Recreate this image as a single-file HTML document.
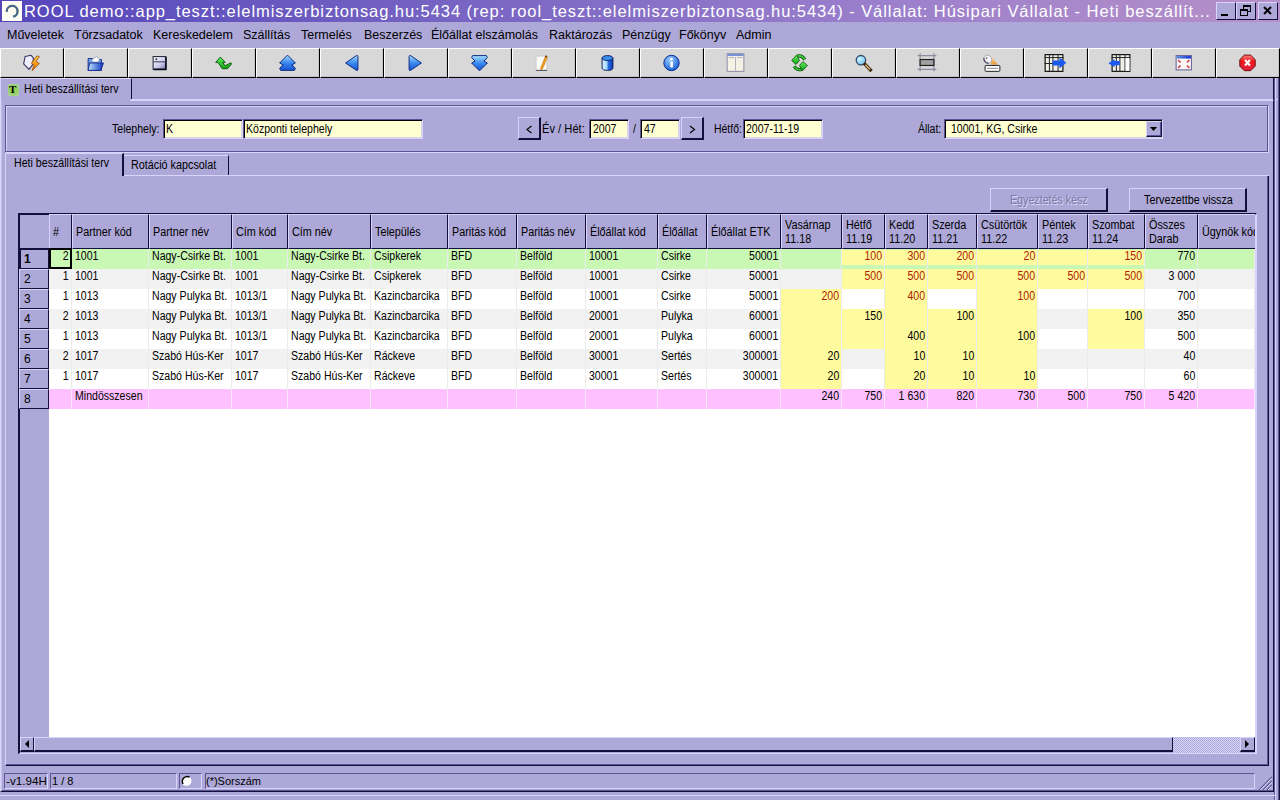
<!DOCTYPE html><html><head><meta charset="utf-8"><style>
*{margin:0;padding:0;box-sizing:border-box}
html,body{width:1280px;height:800px;overflow:hidden;background:#ada8d8;font-family:"Liberation Sans",sans-serif;color:#000;font-size:11px}
.a{position:absolute}
.t{position:absolute;white-space:nowrap;line-height:1}
.raised{position:absolute;background:#ada8d8;border-top:1px solid #d8d4fc;border-left:1px solid #d8d4fc;border-right:1px solid #12103a;border-bottom:1px solid #12103a}
.sunk{position:absolute;border-top:1px solid #5c5494;border-left:1px solid #5c5494;border-right:1px solid #d8d4fc;border-bottom:1px solid #d8d4fc}
.inp{position:absolute;top:119px;height:20px;background:#ffffd2;border-top:1px solid #5c5494;border-left:1px solid #5c5494;border-right:1px solid #d8d4fc;border-bottom:1px solid #d8d4fc;box-shadow:inset 1px 1px 0 #000, inset -1px -1px 0 #d6d3e4}
.tb{position:absolute;top:48px;height:30px;width:64px;background:#d8d8d8;border-top:1px solid #fff;border-left:1px solid #fff;border-right:1px solid #000;border-bottom:1px solid #000;box-shadow:inset -1px -1px 0 #c4c4c8}
.tb svg{position:absolute;left:0;top:0}
.hc{position:absolute;top:214px;height:35px;background:#ada8d8;border-left:1px solid #d8d4fc;border-top:1px solid #d8d4fc;border-right:1px solid #12103a;border-bottom:1px solid #12103a}
.hc span{position:absolute;left:4px;white-space:nowrap;line-height:1}
.rh{position:absolute;left:19px;width:30px;height:20px;background:#ada8d8;border-top:1px solid #d8d4fc;border-left:1px solid #d8d4fc;border-right:1px solid #12103a;border-bottom:1px solid #12103a}
.rh span{position:absolute;left:5px;top:5px;font-size:12px;line-height:1}
.c{position:absolute;height:20px;border-right:1px solid #ebebeb;white-space:nowrap;line-height:1}
.c span{position:absolute;top:5px}
</style></head><body>
<div class="a" style="left:0;top:0;width:1280px;height:22px;background:linear-gradient(90deg,#5646bc 0%,#6c5cc0 25%,#9c80cc 70%,#b690c8 100%)"></div>
<div class="a" style="left:2px;top:1px;width:20px;height:20px;background:#fdfdf4"></div>
<svg class="a" style="left:2px;top:1px" width="20" height="20"><path d="M4.8 10.8 A5.4 5.4 0 1 1 11 15.6" stroke="#456885" stroke-width="2.4" fill="none"/></svg>
<div class="t" style="left:24px;top:3px;font-size:16.5px;color:#fff;letter-spacing:0.94px">ROOL demo::app_teszt::elelmiszerbiztonsag.hu:5434 (rep: rool_teszt::elelmiszerbiztonsag.hu:5434) - Vállalat: Húsipari Vállalat - Heti beszállít...</div>
<div class="raised" style="left:1216px;top:2px;width:20px;height:18px"></div>
<div class="raised" style="left:1236px;top:2px;width:20px;height:18px"></div>
<div class="raised" style="left:1258px;top:2px;width:20px;height:18px"></div>
<div class="a" style="left:1221px;top:14px;width:7px;height:2px;background:#000"></div>
<svg class="a" style="left:1236px;top:2px" width="20" height="18"><rect x="7.5" y="3.5" width="7" height="6" fill="none" stroke="#000"/><path d="M7 4 H15" stroke="#000" stroke-width="2"/><rect x="4.5" y="7.5" width="7" height="6" fill="#ada8d8" stroke="#000"/><path d="M4 8 H12" stroke="#000" stroke-width="2"/></svg>
<svg class="a" style="left:1258px;top:2px" width="20" height="18"><path d="M6 5 L13 12 M13 5 L6 12" stroke="#000" fill="none" stroke-width="2"/></svg>
<div class="t" style="left:7px;top:29px;font-size:12.5px">Műveletek</div>
<div class="t" style="left:74px;top:29px;font-size:12.5px">Törzsadatok</div>
<div class="t" style="left:153px;top:29px;font-size:12.5px">Kereskedelem</div>
<div class="t" style="left:243px;top:29px;font-size:12.5px">Szállítás</div>
<div class="t" style="left:301px;top:29px;font-size:12.5px">Termelés</div>
<div class="t" style="left:364px;top:29px;font-size:12.5px">Beszerzés</div>
<div class="t" style="left:431px;top:29px;font-size:12.5px">Élőállat elszámolás</div>
<div class="t" style="left:549px;top:29px;font-size:12.5px">Raktározás</div>
<div class="t" style="left:622px;top:29px;font-size:12.5px">Pénzügy</div>
<div class="t" style="left:679px;top:29px;font-size:12.5px">Főkönyv</div>
<div class="t" style="left:736px;top:29px;font-size:12.5px">Admin</div>
<svg width="0" height="0" style="position:absolute"><defs><linearGradient id="gblue" x1="0" y1="0" x2="0" y2="1"><stop offset="0" stop-color="#a8e0ff"/><stop offset="0.5" stop-color="#3a8af0"/><stop offset="1" stop-color="#1a50d0"/></linearGradient><linearGradient id="ggr" x1="0" y1="0" x2="0" y2="1"><stop offset="0" stop-color="#60f060"/><stop offset="1" stop-color="#10a010"/></linearGradient><linearGradient id="gor" x1="0" y1="0" x2="0" y2="1"><stop offset="0" stop-color="#ffd040"/><stop offset="1" stop-color="#e07000"/></linearGradient><linearGradient id="gfold" x1="0" y1="0" x2="1" y2="0"><stop offset="0" stop-color="#c0e8ff"/><stop offset="1" stop-color="#0a30c0"/></linearGradient><linearGradient id="gflop" x1="0" y1="0" x2="1" y2="1"><stop offset="0" stop-color="#ffffff"/><stop offset="0.6" stop-color="#c8c8ec"/><stop offset="1" stop-color="#7070a0"/></linearGradient><linearGradient id="gcyl" x1="0" y1="0" x2="1" y2="0"><stop offset="0" stop-color="#d8f4ff"/><stop offset="0.45" stop-color="#a0d8ff"/><stop offset="0.55" stop-color="#2a70e0"/><stop offset="1" stop-color="#0a3ac0"/></linearGradient><radialGradient id="ginfo" cx="0.4" cy="0.3" r="0.8"><stop offset="0" stop-color="#9ad0ff"/><stop offset="1" stop-color="#0a50d0"/></radialGradient><linearGradient id="gred" x1="0" y1="0" x2="0" y2="1"><stop offset="0" stop-color="#ff8080"/><stop offset="0.4" stop-color="#f01818"/><stop offset="1" stop-color="#e02040"/></linearGradient><linearGradient id="gtitle" x1="0" y1="0" x2="1" y2="0"><stop offset="0" stop-color="#5a90e0"/><stop offset="1" stop-color="#0a2ad0"/></linearGradient><radialGradient id="glens" cx="0.35" cy="0.35" r="0.7"><stop offset="0" stop-color="#c8f8ff"/><stop offset="1" stop-color="#78c0ee"/></radialGradient><linearGradient id="gor2" x1="0" y1="0" x2="0" y2="1"><stop offset="0" stop-color="#f8e0b0"/><stop offset="1" stop-color="#e89830"/></linearGradient></defs></svg>
<div class="tb" style="left:0px"><svg width="63" height="28" viewBox="0 0 64 28" style="left:-1px;top:-1px"><path d="M25.5 8.5 L31.5 7.2 L34 10 L33 17 L29.5 21.5 L24 16 Z" fill="#eeedfb" stroke="#34325e" stroke-width="1.1" stroke-linejoin="round"/><path d="M37.5 7.8 L40 8.5 L36.5 13.5 L40 15.5 L32.5 23 L34.5 17.2 L31.8 15.2 Z" fill="url(#gor)" stroke="#a04800" stroke-width="0.8" stroke-linejoin="round"/></svg></div>
<div class="tb" style="left:64px"><svg width="63" height="28" viewBox="0 0 64 28" style="left:-1px;top:-1px"><path d="M24.5 10.5 H29 L30 11.5 H38 V22.5 H24.5Z" fill="#6aa0e8" stroke="#1a3090"/><path d="M28 12 L33 8.5 L36 11 L35 14 L29 14Z" fill="#fff" stroke="#8080a0" stroke-width="0.6"/><path d="M26 15 H40 L37.5 22.5 H24.5Z" fill="url(#gfold)" stroke="#1a2a90"/></svg></div>
<div class="tb" style="left:128px"><svg width="63" height="28" viewBox="0 0 64 28" style="left:-1px;top:-1px"><rect x="25.5" y="8.5" width="13" height="13" fill="url(#gflop)" stroke="#1a1a30"/><path d="M38.5 9 V21.5 H26" stroke="#0a0a20" stroke-width="1.6" fill="none"/><circle cx="28.8" cy="11.2" r="1" fill="#303040"/><path d="M26 13.8 H38" stroke="#50506a" stroke-width="1.2"/></svg></div>
<div class="tb" style="left:192px"><svg width="63" height="28" viewBox="0 0 64 28" style="left:-1px;top:-1px"><path d="M28.8 9 L33.8 14.4 L31.2 14.4 L33.6 17.8 L39.6 14.8 L40.2 16 L36 20.8 L30.6 20.8 L26.6 14.6 L24 14.4 Z" fill="url(#ggr)" stroke="#0a500a" stroke-width="0.9" stroke-linejoin="round"/></svg></div>
<div class="tb" style="left:256px"><svg width="63" height="28" viewBox="0 0 64 28" style="left:-1px;top:-1px"><path d="M32 7 L40 15 L36.5 16.8 L40 20.5 L39 22.5 L25 22.5 L24 20.5 L27.5 16.8 L24 15 Z" fill="url(#gblue)" stroke="#0a2a80" stroke-width="1" stroke-linejoin="round"/></svg></div>
<div class="tb" style="left:320px"><svg width="63" height="28" viewBox="0 0 64 28" style="left:-1px;top:-1px"><path d="M26 15 L37 7.5 Q38.5 7 38.5 8.5 V21.5 Q38.5 23 37 22.5Z" fill="url(#gblue)" stroke="#0a2a80" stroke-width="1" stroke-linejoin="round"/></svg></div>
<div class="tb" style="left:384px"><svg width="63" height="28" viewBox="0 0 64 28" style="left:-1px;top:-1px"><path d="M38 15 L27 7.5 Q25.5 7 25.5 8.5 V21.5 Q25.5 23 27 22.5Z" fill="url(#gblue)" stroke="#0a2a80" stroke-width="1" stroke-linejoin="round"/></svg></div>
<div class="tb" style="left:448px"><svg width="63" height="28" viewBox="0 0 64 28" style="left:-1px;top:-1px"><path d="M32 23 L40 15 L36.5 13.2 L40 9.5 L39 7.5 L25 7.5 L24 9.5 L27.5 13.2 L24 15 Z" fill="url(#gblue)" stroke="#0a2a80" stroke-width="1" stroke-linejoin="round"/></svg></div>
<div class="tb" style="left:512px"><svg width="63" height="28" viewBox="0 0 64 28" style="left:-1px;top:-1px"><rect x="24.5" y="8" width="11" height="14.5" fill="#fbfbf6" stroke="#c8c8d0" stroke-width="0.8"/><path d="M24.5 22.5 H35.5" stroke="#404050"/><path d="M29 20.5 L34 8 L36 9 L31 21 L29.2 21.5Z" fill="#f0a020" stroke="#c07010" stroke-width="0.6"/><circle cx="34.8" cy="8.3" r="0.9" fill="#603000"/></svg></div>
<div class="tb" style="left:576px"><svg width="63" height="28" viewBox="0 0 64 28" style="left:-1px;top:-1px"><path d="M26.5 10 V20 Q26.5 22.5 32 22.5 Q37.5 22.5 37.5 20 V10" fill="url(#gcyl)" stroke="#10205a"/><ellipse cx="32" cy="10" rx="5.5" ry="2.5" fill="#3a90f0" stroke="#10205a"/></svg></div>
<div class="tb" style="left:640px"><svg width="63" height="28" viewBox="0 0 64 28" style="left:-1px;top:-1px"><circle cx="32" cy="15" r="7.8" fill="url(#ginfo)" stroke="#0a3090"/><circle cx="32" cy="11" r="1.4" fill="#fff"/><rect x="30.8" y="13.5" width="2.6" height="6" fill="#fff"/></svg></div>
<div class="tb" style="left:704px"><svg width="63" height="28" viewBox="0 0 64 28" style="left:-1px;top:-1px"><rect x="23.5" y="5.5" width="17" height="18" fill="#f4f2e4" stroke="#8a8aa8"/><rect x="24" y="6" width="16" height="1.8" fill="#6a8ad8"/><path d="M32 9 V23 M25 9.5 H30.5 M33.5 9.5 H39" stroke="#b0b0c0"/></svg></div>
<div class="tb" style="left:768px"><svg width="63" height="28" viewBox="0 0 64 28" style="left:-1px;top:-1px"><path d="M29.5 8 Q34.5 6.8 37.5 11.5" stroke="#0a500a" stroke-width="3.2" fill="none"/><path d="M29.5 8 Q34.5 6.8 37.5 11.5" stroke="#40d040" stroke-width="1.6" fill="none"/><path d="M34.5 21.5 Q29.5 22.8 26.5 18.5" stroke="#0a500a" stroke-width="3.2" fill="none"/><path d="M34.5 21.5 Q29.5 22.8 26.5 18.5" stroke="#30c030" stroke-width="1.6" fill="none"/><path d="M24 12.5 L29 7 L32 12.5 L28.5 16.5 Z" fill="url(#ggr)" stroke="#0a500a" stroke-width="0.8" stroke-linejoin="round"/><path d="M40 17.5 L35 23 L32 17.5 L35.5 13.5 Z" fill="url(#ggr)" stroke="#0a500a" stroke-width="0.8" stroke-linejoin="round"/></svg></div>
<div class="tb" style="left:832px"><svg width="63" height="28" viewBox="0 0 64 28" style="left:-1px;top:-1px"><circle cx="29.4" cy="12.2" r="4.8" fill="url(#glens)" stroke="#34486a" stroke-width="1.3"/><path d="M33.6 16.4 L39 22" stroke="#3a2a10" stroke-width="3.4" stroke-linecap="square"/><path d="M33.9 16.7 L38.7 21.7" stroke="#e8b878" stroke-width="1.4"/></svg></div>
<div class="tb" style="left:896px"><svg width="63" height="28" viewBox="0 0 64 28" style="left:-1px;top:-1px"><path d="M22 7.5 H41 M22 21.5 H41" stroke="#8a8aa0" stroke-width="1.2"/><path d="M24.5 5 V23.5 M38.5 5 V23.5" stroke="#8a8aa0" stroke-width="1.2"/><rect x="24.5" y="11.5" width="14" height="6" fill="#a0a0a0" stroke="#202020" stroke-width="1.2"/></svg></div>
<div class="tb" style="left:960px"><svg width="63" height="28" viewBox="0 0 64 28" style="left:-1px;top:-1px"><path d="M32 8.5 L38.5 16.5 H31.5Z" fill="url(#gor2)"/><circle cx="28" cy="11.4" r="4.2" fill="#f4f4f8" stroke="#a0a0b0" stroke-width="0.8"/><path d="M24.2 10 Q24.5 14.5 29 15.4" stroke="#383848" stroke-width="1.2" fill="none"/><circle cx="27" cy="10" r="0.9" fill="#606070"/><rect x="25.5" y="17.5" width="15" height="6" rx="1" fill="#fff" stroke="#202020"/><path d="M28 20.5 H38.5" stroke="#404050" stroke-width="1.2" stroke-dasharray="1 1"/></svg></div>
<div class="tb" style="left:1024px"><svg width="63" height="28" viewBox="0 0 64 28" style="left:-1px;top:-1px"><rect x="21.5" y="6.5" width="18" height="17" fill="#f0efe8" stroke="#101010" stroke-width="1.2"/><path d="M21 9.5 H40 M21 15.5 H40 M25.8 6 V24 M29.4 6 V24 M34.6 6 V24" stroke="#202020" stroke-width="1"/><path d="M29 12.5 H36 V9.5 L43 14.8 L36 20.5 V17.5 H29Z" fill="#1a5af0"/></svg></div>
<div class="tb" style="left:1088px"><svg width="63" height="28" viewBox="0 0 64 28" style="left:-1px;top:-1px"><rect x="24.5" y="6.5" width="18" height="17" fill="#f0efe8" stroke="#101010" stroke-width="1.2"/><path d="M24 9.5 H43 M28.8 6 V24 M32.4 6 V24 M37.6 6 V24" stroke="#202020" stroke-width="1"/><rect x="38.2" y="10" width="4" height="13" fill="#fff"/><path d="M32.2 13 H27 V11 L20.8 15.2 L27 19.4 V17.4 H32.2Z" fill="#1a5af0"/></svg></div>
<div class="tb" style="left:1152px"><svg width="63" height="28" viewBox="0 0 64 28" style="left:-1px;top:-1px"><rect x="24.5" y="7.5" width="15.5" height="14.5" fill="#fff6f6" stroke="#5a5a90"/><rect x="25" y="8" width="14.5" height="2.5" fill="url(#gtitle)"/><path d="M26.5 12 L29 14.5 M38 12 L35.5 14.5 M26.5 20 L29 17.5 M38 20 L35.5 17.5" stroke="#c04050" stroke-width="1.6"/></svg></div>
<div class="tb" style="left:1216px"><svg width="63" height="28" viewBox="0 0 64 28" style="left:-1px;top:-1px"><path d="M28.8 7 H35.2 L39.8 11.6 V18.2 L35.2 22.8 H28.8 L24.2 18.2 V11.6Z" fill="url(#gred)" stroke="#700808"/><path d="M29.5 12 L34.5 17.5 M34.5 12 L29.5 17.5" stroke="#fff" stroke-width="2.2"/></svg></div>
<div class="a" style="left:0;top:78px;width:132px;height:23px;border-left:1px solid #d8d4fc;border-top:1px solid #d8d4fc;border-right:1px solid #12103a"></div>
<div class="a" style="left:8px;top:84px;width:11px;height:12px;background:radial-gradient(circle at 50% 50%,#88d040 0,#98d070 60%,#b8d8a8 100%);border-radius:2px"></div><div class="t" style="left:9px;top:84px;font-size:11px;font-family:'Liberation Serif';font-weight:bold;color:#000">T</div>
<div class="t" style="left:24px;top:83px;font-size:12px;transform:scaleX(0.88);transform-origin:0 0;">Heti beszállítási terv</div>
<div class="a" style="left:131px;top:99px;width:1149px;height:1px;background:#d8d4fc"></div>
<div class="a" style="left:0;top:100px;width:1274px;height:692px;border-left:1px solid #d8d4fc;border-top:1px solid #d8d4fc;border-right:1px solid #12103a;border-bottom:1px solid #12103a"></div>
<div class="a" style="left:1274px;top:78px;width:1px;height:722px;background:#5c5494"></div>
<div class="a" style="left:1px;top:790px;width:1272px;height:1px;background:#5c5494"></div>
<div class="a" style="left:1273px;top:78px;width:1px;height:22px;background:#12103a"></div>
<div class="a" style="left:1275px;top:78px;width:1px;height:722px;background:#d8d4fc"></div>
<div class="a" style="left:1278px;top:78px;width:1px;height:722px;background:#5c5494"></div>
<div class="a" style="left:1279px;top:78px;width:1px;height:722px;background:#12103a"></div>
<div class="a" style="left:0;top:795px;width:1275px;height:1px;background:#d8d4fc"></div>
<svg class="a" style="left:1256px;top:775px" width="18" height="16"><path d="M3 15 L16 2 M7 15 L16 6 M11 15 L16 10" stroke="#5a5690" stroke-width="1.2"/><path d="M4 15 L16 3 M8 15 L16 7 M12 15 L16 11" stroke="#dcd9f6" stroke-width="0.8"/></svg>
<div class="a" style="left:1px;top:100px;width:129px;height:1px;background:#ada8d8"></div>
<div class="a" style="left:1px;top:101px;width:1px;height:690px;background:#c4c0ec"></div>
<div class="a" style="left:5px;top:105px;width:1263px;height:47px;border:1px solid #5c5494;box-shadow:1px 1px 0 #d8d4fc, inset 1px 1px 0 #d8d4fc"></div>
<div class="t" style="left:112px;top:123px;font-size:12px;transform:scaleX(0.88);transform-origin:0 0;">Telephely:</div>
<div class="inp" style="left:163px;width:80px"></div>
<div class="t" style="left:166px;top:123px;font-size:12px;transform:scaleX(0.88);transform-origin:0 0;">K</div>
<div class="inp" style="left:243px;width:180px"></div>
<div class="t" style="left:246px;top:123px;font-size:12px;transform:scaleX(0.88);transform-origin:0 0;">Központi telephely</div>
<div class="raised" style="left:518px;top:117px;width:23px;height:23px;border-right-width:2px;border-bottom-width:2px"></div>
<svg class="a" style="left:520px;top:120px" width="20" height="20"><path d="M11.5 6 L7 9.5 L11.5 13" stroke="#000" stroke-width="1.1" fill="none"/></svg>
<div class="t" style="left:542px;top:123px;font-size:12px;transform:scaleX(0.93);transform-origin:0 0;">Év / Hét:</div>
<div class="inp" style="left:589px;width:40px"></div>
<div class="t" style="left:593px;top:123px;font-size:12px;transform:scaleX(0.88);transform-origin:0 0;">2007</div>
<div class="t" style="left:633px;top:123px;font-size:12px;transform:scaleX(0.88);transform-origin:0 0;">/</div>
<div class="inp" style="left:640px;width:40px"></div>
<div class="t" style="left:644px;top:123px;font-size:12px;transform:scaleX(0.88);transform-origin:0 0;">47</div>
<div class="raised" style="left:681px;top:117px;width:23px;height:23px;border-right-width:2px;border-bottom-width:2px"></div>
<svg class="a" style="left:683px;top:120px" width="20" height="20"><path d="M7 6 L11.5 9.5 L7 13" stroke="#000" stroke-width="1.1" fill="none"/></svg>
<div class="t" style="left:714px;top:123px;font-size:12px;transform:scaleX(0.87);transform-origin:0 0;">Hétfő:</div>
<div class="inp" style="left:743px;width:80px"></div>
<div class="t" style="left:746px;top:123px;font-size:12px;transform:scaleX(0.88);transform-origin:0 0;">2007-11-19</div>
<div class="t" style="left:918px;top:123px;font-size:12px;transform:scaleX(0.87);transform-origin:0 0;">Állat:</div>
<div class="inp" style="left:944px;width:219px"></div>
<div class="t" style="left:951px;top:123px;font-size:12px;transform:scaleX(0.88);transform-origin:0 0;">10001, KG, Csirke</div>
<div class="raised" style="left:1146px;top:121px;width:16px;height:16px;box-shadow:inset -1px -1px 0 #5c5494"></div>
<svg class="a" style="left:1146px;top:121px" width="16" height="16"><path d="M4 6 H11 L7.5 10Z" fill="#000"/></svg>
<div class="a" style="left:5px;top:153px;width:119px;height:23px;background:#ada8d8;border-left:1px solid #d8d4fc;border-top:1px solid #d8d4fc;border-right:2px solid #12103a"></div>
<div class="t" style="left:14px;top:157px;font-size:12px;transform:scaleX(0.885);transform-origin:0 0;">Heti beszállítási terv</div>
<div class="a" style="left:124px;top:155px;width:105px;height:20px;border-top:1px solid #d8d4fc;border-right:1px solid #12103a"></div>
<div class="t" style="left:131px;top:159px;font-size:12px;transform:scaleX(0.9);transform-origin:0 0;">Rotáció kapcsolat</div>
<div class="a" style="left:5px;top:175px;width:1264px;height:591px;border-left:1px solid #d8d4fc;border-right:1px solid #12103a;border-bottom:1px solid #12103a"></div>
<div class="a" style="left:1267px;top:176px;width:1px;height:589px;background:#5c5494"></div>
<div class="a" style="left:6px;top:764px;width:1262px;height:1px;background:#5c5494"></div>
<div class="a" style="left:124px;top:175px;width:1145px;height:1px;background:#d8d4fc"></div>
<div class="raised" style="left:990px;top:188px;width:118px;height:24px;border-right-width:2px;border-bottom-width:2px"></div>
<div class="t" style="left:1010px;top:194px;font-size:12px;transform:scaleX(0.89);transform-origin:0 0;color:#7d78a8;text-shadow:1px 1px 0 #dcd9f6">Egyeztetés kész</div>
<div class="raised" style="left:1129px;top:188px;width:118px;height:24px;border-right-width:2px;border-bottom-width:2px"></div>
<div class="t" style="left:1144px;top:194px;font-size:12px;transform:scaleX(0.9);transform-origin:0 0;">Tervezettbe vissza</div>
<div class="a" style="left:18px;top:213px;width:1239px;height:541px;background:#fff;border-left:2px solid #12103a;border-top:2px solid #12103a;border-right:2px solid #d8d4fc;border-bottom:1px solid #d8d4fc"></div>
<div class="a" style="left:20px;top:409px;width:29px;height:328px;background:#ada8d8"></div>
<div class="a" style="left:20px;top:215px;width:29px;height:34px;background:#ada8d8"></div>
<div class="hc" style="left:49px;width:23px"></div>
<div class="t" style="left:53px;top:226px;font-size:12px;transform:scaleX(0.9);transform-origin:0 0;">#</div>
<div class="hc" style="left:72px;width:77px"></div>
<div class="t" style="left:76px;top:226px;font-size:12px;transform:scaleX(0.9);transform-origin:0 0;">Partner kód</div>
<div class="hc" style="left:149px;width:83px"></div>
<div class="t" style="left:153px;top:226px;font-size:12px;transform:scaleX(0.9);transform-origin:0 0;">Partner név</div>
<div class="hc" style="left:232px;width:56px"></div>
<div class="t" style="left:236px;top:226px;font-size:12px;transform:scaleX(0.9);transform-origin:0 0;">Cím kód</div>
<div class="hc" style="left:288px;width:83px"></div>
<div class="t" style="left:292px;top:226px;font-size:12px;transform:scaleX(0.9);transform-origin:0 0;">Cím név</div>
<div class="hc" style="left:371px;width:77px"></div>
<div class="t" style="left:375px;top:226px;font-size:12px;transform:scaleX(0.9);transform-origin:0 0;">Település</div>
<div class="hc" style="left:448px;width:69px"></div>
<div class="t" style="left:452px;top:226px;font-size:12px;transform:scaleX(0.9);transform-origin:0 0;">Paritás kód</div>
<div class="hc" style="left:517px;width:69px"></div>
<div class="t" style="left:521px;top:226px;font-size:12px;transform:scaleX(0.9);transform-origin:0 0;">Paritás név</div>
<div class="hc" style="left:586px;width:72px"></div>
<div class="t" style="left:590px;top:226px;font-size:12px;transform:scaleX(0.9);transform-origin:0 0;">Élőállat kód</div>
<div class="hc" style="left:658px;width:49px"></div>
<div class="t" style="left:662px;top:226px;font-size:12px;transform:scaleX(0.9);transform-origin:0 0;">Élőállat</div>
<div class="hc" style="left:707px;width:74px"></div>
<div class="t" style="left:711px;top:226px;font-size:12px;transform:scaleX(0.9);transform-origin:0 0;">Élőállat ETK</div>
<div class="hc" style="left:781px;width:61px"></div>
<div class="t" style="left:785px;top:219px;font-size:12px;transform:scaleX(0.9);transform-origin:0 0;">Vasárnap</div>
<div class="t" style="left:785px;top:233px;font-size:12px;transform:scaleX(0.9);transform-origin:0 0;">11.18</div>
<div class="hc" style="left:842px;width:43px"></div>
<div class="t" style="left:846px;top:219px;font-size:12px;transform:scaleX(0.9);transform-origin:0 0;">Hétfő</div>
<div class="t" style="left:846px;top:233px;font-size:12px;transform:scaleX(0.9);transform-origin:0 0;">11.19</div>
<div class="hc" style="left:885px;width:43px"></div>
<div class="t" style="left:889px;top:219px;font-size:12px;transform:scaleX(0.9);transform-origin:0 0;">Kedd</div>
<div class="t" style="left:889px;top:233px;font-size:12px;transform:scaleX(0.9);transform-origin:0 0;">11.20</div>
<div class="hc" style="left:928px;width:49px"></div>
<div class="t" style="left:932px;top:219px;font-size:12px;transform:scaleX(0.9);transform-origin:0 0;">Szerda</div>
<div class="t" style="left:932px;top:233px;font-size:12px;transform:scaleX(0.9);transform-origin:0 0;">11.21</div>
<div class="hc" style="left:977px;width:61px"></div>
<div class="t" style="left:981px;top:219px;font-size:12px;transform:scaleX(0.9);transform-origin:0 0;">Csütörtök</div>
<div class="t" style="left:981px;top:233px;font-size:12px;transform:scaleX(0.9);transform-origin:0 0;">11.22</div>
<div class="hc" style="left:1038px;width:50px"></div>
<div class="t" style="left:1042px;top:219px;font-size:12px;transform:scaleX(0.9);transform-origin:0 0;">Péntek</div>
<div class="t" style="left:1042px;top:233px;font-size:12px;transform:scaleX(0.9);transform-origin:0 0;">11.23</div>
<div class="hc" style="left:1088px;width:57px"></div>
<div class="t" style="left:1092px;top:219px;font-size:12px;transform:scaleX(0.9);transform-origin:0 0;">Szombat</div>
<div class="t" style="left:1092px;top:233px;font-size:12px;transform:scaleX(0.9);transform-origin:0 0;">11.24</div>
<div class="hc" style="left:1145px;width:53px"></div>
<div class="t" style="left:1149px;top:219px;font-size:12px;transform:scaleX(0.9);transform-origin:0 0;">Összes</div>
<div class="t" style="left:1149px;top:233px;font-size:12px;transform:scaleX(0.9);transform-origin:0 0;">Darab</div>
<div class="hc" style="left:1198px;width:57px;border-right:none;overflow:hidden"><div class="t" style="left:3px;top:11px;font-size:12px;transform:scaleX(0.9);transform-origin:0 0;">Ügynök kód</div></div>
<div class="rh" style="top:249px"></div>
<div class="c" style="left:49px;top:249px;width:23px;background:#c8f8b4"></div>
<div class="c" style="left:72px;top:249px;width:77px;background:#c8f8b4"></div>
<div class="c" style="left:149px;top:249px;width:83px;background:#c8f8b4"></div>
<div class="c" style="left:232px;top:249px;width:56px;background:#c8f8b4"></div>
<div class="c" style="left:288px;top:249px;width:83px;background:#c8f8b4"></div>
<div class="c" style="left:371px;top:249px;width:77px;background:#c8f8b4"></div>
<div class="c" style="left:448px;top:249px;width:69px;background:#c8f8b4"></div>
<div class="c" style="left:517px;top:249px;width:69px;background:#c8f8b4"></div>
<div class="c" style="left:586px;top:249px;width:72px;background:#c8f8b4"></div>
<div class="c" style="left:658px;top:249px;width:49px;background:#c8f8b4"></div>
<div class="c" style="left:707px;top:249px;width:74px;background:#c8f8b4"></div>
<div class="c" style="left:781px;top:249px;width:61px;background:#c8f8b4"></div>
<div class="c" style="left:842px;top:249px;width:43px;background:linear-gradient(#c8f8b4 0 1px,#fdfb9e 1px 16px,#c8f8b4 16px)"></div>
<div class="c" style="left:885px;top:249px;width:43px;background:linear-gradient(#c8f8b4 0 1px,#fdfb9e 1px 16px,#c8f8b4 16px)"></div>
<div class="c" style="left:928px;top:249px;width:49px;background:linear-gradient(#c8f8b4 0 1px,#fdfb9e 1px 16px,#c8f8b4 16px)"></div>
<div class="c" style="left:977px;top:249px;width:61px;background:linear-gradient(#c8f8b4 0 1px,#fdfb9e 1px 16px,#c8f8b4 16px)"></div>
<div class="c" style="left:1038px;top:249px;width:50px;background:linear-gradient(#c8f8b4 0 1px,#fdfb9e 1px 16px,#c8f8b4 16px)"></div>
<div class="c" style="left:1088px;top:249px;width:57px;background:linear-gradient(#c8f8b4 0 1px,#fdfb9e 1px 16px,#c8f8b4 16px)"></div>
<div class="c" style="left:1145px;top:249px;width:53px;background:#c8f8b4"></div>
<div class="c" style="left:1198px;top:249px;width:57px;background:#c8f8b4"></div>
<div class="rh" style="top:269px"></div>
<div class="c" style="left:49px;top:269px;width:23px;background:#f2f2f2"></div>
<div class="c" style="left:72px;top:269px;width:77px;background:#f2f2f2"></div>
<div class="c" style="left:149px;top:269px;width:83px;background:#f2f2f2"></div>
<div class="c" style="left:232px;top:269px;width:56px;background:#f2f2f2"></div>
<div class="c" style="left:288px;top:269px;width:83px;background:#f2f2f2"></div>
<div class="c" style="left:371px;top:269px;width:77px;background:#f2f2f2"></div>
<div class="c" style="left:448px;top:269px;width:69px;background:#f2f2f2"></div>
<div class="c" style="left:517px;top:269px;width:69px;background:#f2f2f2"></div>
<div class="c" style="left:586px;top:269px;width:72px;background:#f2f2f2"></div>
<div class="c" style="left:658px;top:269px;width:49px;background:#f2f2f2"></div>
<div class="c" style="left:707px;top:269px;width:74px;background:#f2f2f2"></div>
<div class="c" style="left:781px;top:269px;width:61px;background:#f2f2f2"></div>
<div class="c" style="left:842px;top:269px;width:43px;background:#fdfb9e"></div>
<div class="c" style="left:885px;top:269px;width:43px;background:#fdfb9e"></div>
<div class="c" style="left:928px;top:269px;width:49px;background:#fdfb9e"></div>
<div class="c" style="left:977px;top:269px;width:61px;background:#fdfb9e"></div>
<div class="c" style="left:1038px;top:269px;width:50px;background:#fdfb9e"></div>
<div class="c" style="left:1088px;top:269px;width:57px;background:#fdfb9e"></div>
<div class="c" style="left:1145px;top:269px;width:53px;background:#f2f2f2"></div>
<div class="c" style="left:1198px;top:269px;width:57px;background:#f2f2f2"></div>
<div class="rh" style="top:289px"></div>
<div class="c" style="left:49px;top:289px;width:23px;background:#fff"></div>
<div class="c" style="left:72px;top:289px;width:77px;background:#fff"></div>
<div class="c" style="left:149px;top:289px;width:83px;background:#fff"></div>
<div class="c" style="left:232px;top:289px;width:56px;background:#fff"></div>
<div class="c" style="left:288px;top:289px;width:83px;background:#fff"></div>
<div class="c" style="left:371px;top:289px;width:77px;background:#fff"></div>
<div class="c" style="left:448px;top:289px;width:69px;background:#fff"></div>
<div class="c" style="left:517px;top:289px;width:69px;background:#fff"></div>
<div class="c" style="left:586px;top:289px;width:72px;background:#fff"></div>
<div class="c" style="left:658px;top:289px;width:49px;background:#fff"></div>
<div class="c" style="left:707px;top:289px;width:74px;background:#fff"></div>
<div class="c" style="left:781px;top:289px;width:61px;background:#fdfb9e"></div>
<div class="c" style="left:842px;top:289px;width:43px;background:#fff"></div>
<div class="c" style="left:885px;top:289px;width:43px;background:#fdfb9e"></div>
<div class="c" style="left:928px;top:289px;width:49px;background:#fff"></div>
<div class="c" style="left:977px;top:289px;width:61px;background:#fdfb9e"></div>
<div class="c" style="left:1038px;top:289px;width:50px;background:#fff"></div>
<div class="c" style="left:1088px;top:289px;width:57px;background:#fff"></div>
<div class="c" style="left:1145px;top:289px;width:53px;background:#fff"></div>
<div class="c" style="left:1198px;top:289px;width:57px;background:#fff"></div>
<div class="rh" style="top:309px"></div>
<div class="c" style="left:49px;top:309px;width:23px;background:#f2f2f2"></div>
<div class="c" style="left:72px;top:309px;width:77px;background:#f2f2f2"></div>
<div class="c" style="left:149px;top:309px;width:83px;background:#f2f2f2"></div>
<div class="c" style="left:232px;top:309px;width:56px;background:#f2f2f2"></div>
<div class="c" style="left:288px;top:309px;width:83px;background:#f2f2f2"></div>
<div class="c" style="left:371px;top:309px;width:77px;background:#f2f2f2"></div>
<div class="c" style="left:448px;top:309px;width:69px;background:#f2f2f2"></div>
<div class="c" style="left:517px;top:309px;width:69px;background:#f2f2f2"></div>
<div class="c" style="left:586px;top:309px;width:72px;background:#f2f2f2"></div>
<div class="c" style="left:658px;top:309px;width:49px;background:#f2f2f2"></div>
<div class="c" style="left:707px;top:309px;width:74px;background:#f2f2f2"></div>
<div class="c" style="left:781px;top:309px;width:61px;background:#fdfb9e"></div>
<div class="c" style="left:842px;top:309px;width:43px;background:#fdfb9e"></div>
<div class="c" style="left:885px;top:309px;width:43px;background:#fdfb9e"></div>
<div class="c" style="left:928px;top:309px;width:49px;background:#fdfb9e"></div>
<div class="c" style="left:977px;top:309px;width:61px;background:#fdfb9e"></div>
<div class="c" style="left:1038px;top:309px;width:50px;background:#f2f2f2"></div>
<div class="c" style="left:1088px;top:309px;width:57px;background:#fdfb9e"></div>
<div class="c" style="left:1145px;top:309px;width:53px;background:#f2f2f2"></div>
<div class="c" style="left:1198px;top:309px;width:57px;background:#f2f2f2"></div>
<div class="rh" style="top:329px"></div>
<div class="c" style="left:49px;top:329px;width:23px;background:#fff"></div>
<div class="c" style="left:72px;top:329px;width:77px;background:#fff"></div>
<div class="c" style="left:149px;top:329px;width:83px;background:#fff"></div>
<div class="c" style="left:232px;top:329px;width:56px;background:#fff"></div>
<div class="c" style="left:288px;top:329px;width:83px;background:#fff"></div>
<div class="c" style="left:371px;top:329px;width:77px;background:#fff"></div>
<div class="c" style="left:448px;top:329px;width:69px;background:#fff"></div>
<div class="c" style="left:517px;top:329px;width:69px;background:#fff"></div>
<div class="c" style="left:586px;top:329px;width:72px;background:#fff"></div>
<div class="c" style="left:658px;top:329px;width:49px;background:#fff"></div>
<div class="c" style="left:707px;top:329px;width:74px;background:#fff"></div>
<div class="c" style="left:781px;top:329px;width:61px;background:#fdfb9e"></div>
<div class="c" style="left:842px;top:329px;width:43px;background:#fdfb9e"></div>
<div class="c" style="left:885px;top:329px;width:43px;background:#fdfb9e"></div>
<div class="c" style="left:928px;top:329px;width:49px;background:#fdfb9e"></div>
<div class="c" style="left:977px;top:329px;width:61px;background:#fdfb9e"></div>
<div class="c" style="left:1038px;top:329px;width:50px;background:#fff"></div>
<div class="c" style="left:1088px;top:329px;width:57px;background:#fdfb9e"></div>
<div class="c" style="left:1145px;top:329px;width:53px;background:#fff"></div>
<div class="c" style="left:1198px;top:329px;width:57px;background:#fff"></div>
<div class="rh" style="top:349px"></div>
<div class="c" style="left:49px;top:349px;width:23px;background:#f2f2f2"></div>
<div class="c" style="left:72px;top:349px;width:77px;background:#f2f2f2"></div>
<div class="c" style="left:149px;top:349px;width:83px;background:#f2f2f2"></div>
<div class="c" style="left:232px;top:349px;width:56px;background:#f2f2f2"></div>
<div class="c" style="left:288px;top:349px;width:83px;background:#f2f2f2"></div>
<div class="c" style="left:371px;top:349px;width:77px;background:#f2f2f2"></div>
<div class="c" style="left:448px;top:349px;width:69px;background:#f2f2f2"></div>
<div class="c" style="left:517px;top:349px;width:69px;background:#f2f2f2"></div>
<div class="c" style="left:586px;top:349px;width:72px;background:#f2f2f2"></div>
<div class="c" style="left:658px;top:349px;width:49px;background:#f2f2f2"></div>
<div class="c" style="left:707px;top:349px;width:74px;background:#f2f2f2"></div>
<div class="c" style="left:781px;top:349px;width:61px;background:#fdfb9e"></div>
<div class="c" style="left:842px;top:349px;width:43px;background:#f2f2f2"></div>
<div class="c" style="left:885px;top:349px;width:43px;background:#fdfb9e"></div>
<div class="c" style="left:928px;top:349px;width:49px;background:#fdfb9e"></div>
<div class="c" style="left:977px;top:349px;width:61px;background:#fdfb9e"></div>
<div class="c" style="left:1038px;top:349px;width:50px;background:#f2f2f2"></div>
<div class="c" style="left:1088px;top:349px;width:57px;background:#f2f2f2"></div>
<div class="c" style="left:1145px;top:349px;width:53px;background:#f2f2f2"></div>
<div class="c" style="left:1198px;top:349px;width:57px;background:#f2f2f2"></div>
<div class="rh" style="top:369px"></div>
<div class="c" style="left:49px;top:369px;width:23px;background:#fff"></div>
<div class="c" style="left:72px;top:369px;width:77px;background:#fff"></div>
<div class="c" style="left:149px;top:369px;width:83px;background:#fff"></div>
<div class="c" style="left:232px;top:369px;width:56px;background:#fff"></div>
<div class="c" style="left:288px;top:369px;width:83px;background:#fff"></div>
<div class="c" style="left:371px;top:369px;width:77px;background:#fff"></div>
<div class="c" style="left:448px;top:369px;width:69px;background:#fff"></div>
<div class="c" style="left:517px;top:369px;width:69px;background:#fff"></div>
<div class="c" style="left:586px;top:369px;width:72px;background:#fff"></div>
<div class="c" style="left:658px;top:369px;width:49px;background:#fff"></div>
<div class="c" style="left:707px;top:369px;width:74px;background:#fff"></div>
<div class="c" style="left:781px;top:369px;width:61px;background:#fdfb9e"></div>
<div class="c" style="left:842px;top:369px;width:43px;background:#fff"></div>
<div class="c" style="left:885px;top:369px;width:43px;background:#fdfb9e"></div>
<div class="c" style="left:928px;top:369px;width:49px;background:#fdfb9e"></div>
<div class="c" style="left:977px;top:369px;width:61px;background:#fdfb9e"></div>
<div class="c" style="left:1038px;top:369px;width:50px;background:#fff"></div>
<div class="c" style="left:1088px;top:369px;width:57px;background:#fff"></div>
<div class="c" style="left:1145px;top:369px;width:53px;background:#fff"></div>
<div class="c" style="left:1198px;top:369px;width:57px;background:#fff"></div>
<div class="rh" style="top:389px"></div>
<div class="c" style="left:49px;top:389px;width:23px;background:#ffc0ff;border-right-color:#fae6fa"></div>
<div class="c" style="left:72px;top:389px;width:77px;background:#ffc0ff;border-right-color:#fae6fa"></div>
<div class="c" style="left:149px;top:389px;width:83px;background:#ffc0ff;border-right-color:#fae6fa"></div>
<div class="c" style="left:232px;top:389px;width:56px;background:#ffc0ff;border-right-color:#fae6fa"></div>
<div class="c" style="left:288px;top:389px;width:83px;background:#ffc0ff;border-right-color:#fae6fa"></div>
<div class="c" style="left:371px;top:389px;width:77px;background:#ffc0ff;border-right-color:#fae6fa"></div>
<div class="c" style="left:448px;top:389px;width:69px;background:#ffc0ff;border-right-color:#fae6fa"></div>
<div class="c" style="left:517px;top:389px;width:69px;background:#ffc0ff;border-right-color:#fae6fa"></div>
<div class="c" style="left:586px;top:389px;width:72px;background:#ffc0ff;border-right-color:#fae6fa"></div>
<div class="c" style="left:658px;top:389px;width:49px;background:#ffc0ff;border-right-color:#fae6fa"></div>
<div class="c" style="left:707px;top:389px;width:74px;background:#ffc0ff;border-right-color:#fae6fa"></div>
<div class="c" style="left:781px;top:389px;width:61px;background:#ffc0ff;border-right-color:#fae6fa"></div>
<div class="c" style="left:842px;top:389px;width:43px;background:#ffc0ff;border-right-color:#fae6fa"></div>
<div class="c" style="left:885px;top:389px;width:43px;background:#ffc0ff;border-right-color:#fae6fa"></div>
<div class="c" style="left:928px;top:389px;width:49px;background:#ffc0ff;border-right-color:#fae6fa"></div>
<div class="c" style="left:977px;top:389px;width:61px;background:#ffc0ff;border-right-color:#fae6fa"></div>
<div class="c" style="left:1038px;top:389px;width:50px;background:#ffc0ff;border-right-color:#fae6fa"></div>
<div class="c" style="left:1088px;top:389px;width:57px;background:#ffc0ff;border-right-color:#fae6fa"></div>
<div class="c" style="left:1145px;top:389px;width:53px;background:#ffc0ff;border-right-color:#fae6fa"></div>
<div class="c" style="left:1198px;top:389px;width:57px;background:#ffc0ff;border-right-color:#fae6fa"></div>
<div class="t" style="left:24px;top:253px;font-size:12px;transform:scaleX(1.0);transform-origin:0 0;font-weight:bold">1</div>
<div class="t" style="right:1211px;top:250px;font-size:12px;transform:scaleX(0.88);transform-origin:100% 0;">2</div>
<div class="t" style="left:75px;top:250px;font-size:12px;transform:scaleX(0.88);transform-origin:0 0;">1001</div>
<div class="t" style="left:152px;top:250px;font-size:12px;transform:scaleX(0.88);transform-origin:0 0;">Nagy-Csirke Bt.</div>
<div class="t" style="left:235px;top:250px;font-size:12px;transform:scaleX(0.88);transform-origin:0 0;">1001</div>
<div class="t" style="left:291px;top:250px;font-size:12px;transform:scaleX(0.88);transform-origin:0 0;">Nagy-Csirke Bt.</div>
<div class="t" style="left:374px;top:250px;font-size:12px;transform:scaleX(0.88);transform-origin:0 0;">Csipkerek</div>
<div class="t" style="left:451px;top:250px;font-size:12px;transform:scaleX(0.88);transform-origin:0 0;">BFD</div>
<div class="t" style="left:520px;top:250px;font-size:12px;transform:scaleX(0.88);transform-origin:0 0;">Belföld</div>
<div class="t" style="left:589px;top:250px;font-size:12px;transform:scaleX(0.88);transform-origin:0 0;">10001</div>
<div class="t" style="left:661px;top:250px;font-size:12px;transform:scaleX(0.88);transform-origin:0 0;">Csirke</div>
<div class="t" style="right:502px;top:250px;font-size:12px;transform:scaleX(0.88);transform-origin:100% 0;">50001</div>
<div class="t" style="right:398px;top:250px;font-size:12px;transform:scaleX(0.88);transform-origin:100% 0;color:#b01c00;">100</div>
<div class="t" style="right:355px;top:250px;font-size:12px;transform:scaleX(0.88);transform-origin:100% 0;color:#b01c00;">300</div>
<div class="t" style="right:306px;top:250px;font-size:12px;transform:scaleX(0.88);transform-origin:100% 0;color:#b01c00;">200</div>
<div class="t" style="right:245px;top:250px;font-size:12px;transform:scaleX(0.88);transform-origin:100% 0;color:#b01c00;">20</div>
<div class="t" style="right:138px;top:250px;font-size:12px;transform:scaleX(0.88);transform-origin:100% 0;color:#b01c00;">150</div>
<div class="t" style="right:85px;top:250px;font-size:12px;transform:scaleX(0.88);transform-origin:100% 0;">770</div>
<div class="t" style="left:24px;top:273px;font-size:12px;transform:scaleX(1.0);transform-origin:0 0;">2</div>
<div class="t" style="right:1211px;top:270px;font-size:12px;transform:scaleX(0.88);transform-origin:100% 0;">1</div>
<div class="t" style="left:75px;top:270px;font-size:12px;transform:scaleX(0.88);transform-origin:0 0;">1001</div>
<div class="t" style="left:152px;top:270px;font-size:12px;transform:scaleX(0.88);transform-origin:0 0;">Nagy-Csirke Bt.</div>
<div class="t" style="left:235px;top:270px;font-size:12px;transform:scaleX(0.88);transform-origin:0 0;">1001</div>
<div class="t" style="left:291px;top:270px;font-size:12px;transform:scaleX(0.88);transform-origin:0 0;">Nagy-Csirke Bt.</div>
<div class="t" style="left:374px;top:270px;font-size:12px;transform:scaleX(0.88);transform-origin:0 0;">Csipkerek</div>
<div class="t" style="left:451px;top:270px;font-size:12px;transform:scaleX(0.88);transform-origin:0 0;">BFD</div>
<div class="t" style="left:520px;top:270px;font-size:12px;transform:scaleX(0.88);transform-origin:0 0;">Belföld</div>
<div class="t" style="left:589px;top:270px;font-size:12px;transform:scaleX(0.88);transform-origin:0 0;">10001</div>
<div class="t" style="left:661px;top:270px;font-size:12px;transform:scaleX(0.88);transform-origin:0 0;">Csirke</div>
<div class="t" style="right:502px;top:270px;font-size:12px;transform:scaleX(0.88);transform-origin:100% 0;">50001</div>
<div class="t" style="right:398px;top:270px;font-size:12px;transform:scaleX(0.88);transform-origin:100% 0;color:#b01c00;">500</div>
<div class="t" style="right:355px;top:270px;font-size:12px;transform:scaleX(0.88);transform-origin:100% 0;color:#b01c00;">500</div>
<div class="t" style="right:306px;top:270px;font-size:12px;transform:scaleX(0.88);transform-origin:100% 0;color:#b01c00;">500</div>
<div class="t" style="right:245px;top:270px;font-size:12px;transform:scaleX(0.88);transform-origin:100% 0;color:#b01c00;">500</div>
<div class="t" style="right:195px;top:270px;font-size:12px;transform:scaleX(0.88);transform-origin:100% 0;color:#b01c00;">500</div>
<div class="t" style="right:138px;top:270px;font-size:12px;transform:scaleX(0.88);transform-origin:100% 0;color:#b01c00;">500</div>
<div class="t" style="right:85px;top:270px;font-size:12px;transform:scaleX(0.88);transform-origin:100% 0;">3 000</div>
<div class="t" style="left:24px;top:293px;font-size:12px;transform:scaleX(1.0);transform-origin:0 0;">3</div>
<div class="t" style="right:1211px;top:290px;font-size:12px;transform:scaleX(0.88);transform-origin:100% 0;">1</div>
<div class="t" style="left:75px;top:290px;font-size:12px;transform:scaleX(0.88);transform-origin:0 0;">1013</div>
<div class="t" style="left:152px;top:290px;font-size:12px;transform:scaleX(0.88);transform-origin:0 0;">Nagy Pulyka Bt.</div>
<div class="t" style="left:235px;top:290px;font-size:12px;transform:scaleX(0.88);transform-origin:0 0;">1013/1</div>
<div class="t" style="left:291px;top:290px;font-size:12px;transform:scaleX(0.88);transform-origin:0 0;">Nagy Pulyka Bt.</div>
<div class="t" style="left:374px;top:290px;font-size:12px;transform:scaleX(0.88);transform-origin:0 0;">Kazincbarcika</div>
<div class="t" style="left:451px;top:290px;font-size:12px;transform:scaleX(0.88);transform-origin:0 0;">BFD</div>
<div class="t" style="left:520px;top:290px;font-size:12px;transform:scaleX(0.88);transform-origin:0 0;">Belföld</div>
<div class="t" style="left:589px;top:290px;font-size:12px;transform:scaleX(0.88);transform-origin:0 0;">10001</div>
<div class="t" style="left:661px;top:290px;font-size:12px;transform:scaleX(0.88);transform-origin:0 0;">Csirke</div>
<div class="t" style="right:502px;top:290px;font-size:12px;transform:scaleX(0.88);transform-origin:100% 0;">50001</div>
<div class="t" style="right:441px;top:290px;font-size:12px;transform:scaleX(0.88);transform-origin:100% 0;color:#b01c00;">200</div>
<div class="t" style="right:355px;top:290px;font-size:12px;transform:scaleX(0.88);transform-origin:100% 0;color:#b01c00;">400</div>
<div class="t" style="right:245px;top:290px;font-size:12px;transform:scaleX(0.88);transform-origin:100% 0;color:#b01c00;">100</div>
<div class="t" style="right:85px;top:290px;font-size:12px;transform:scaleX(0.88);transform-origin:100% 0;">700</div>
<div class="t" style="left:24px;top:313px;font-size:12px;transform:scaleX(1.0);transform-origin:0 0;">4</div>
<div class="t" style="right:1211px;top:310px;font-size:12px;transform:scaleX(0.88);transform-origin:100% 0;">2</div>
<div class="t" style="left:75px;top:310px;font-size:12px;transform:scaleX(0.88);transform-origin:0 0;">1013</div>
<div class="t" style="left:152px;top:310px;font-size:12px;transform:scaleX(0.88);transform-origin:0 0;">Nagy Pulyka Bt.</div>
<div class="t" style="left:235px;top:310px;font-size:12px;transform:scaleX(0.88);transform-origin:0 0;">1013/1</div>
<div class="t" style="left:291px;top:310px;font-size:12px;transform:scaleX(0.88);transform-origin:0 0;">Nagy Pulyka Bt.</div>
<div class="t" style="left:374px;top:310px;font-size:12px;transform:scaleX(0.88);transform-origin:0 0;">Kazincbarcika</div>
<div class="t" style="left:451px;top:310px;font-size:12px;transform:scaleX(0.88);transform-origin:0 0;">BFD</div>
<div class="t" style="left:520px;top:310px;font-size:12px;transform:scaleX(0.88);transform-origin:0 0;">Belföld</div>
<div class="t" style="left:589px;top:310px;font-size:12px;transform:scaleX(0.88);transform-origin:0 0;">20001</div>
<div class="t" style="left:661px;top:310px;font-size:12px;transform:scaleX(0.88);transform-origin:0 0;">Pulyka</div>
<div class="t" style="right:502px;top:310px;font-size:12px;transform:scaleX(0.88);transform-origin:100% 0;">60001</div>
<div class="t" style="right:398px;top:310px;font-size:12px;transform:scaleX(0.88);transform-origin:100% 0;">150</div>
<div class="t" style="right:306px;top:310px;font-size:12px;transform:scaleX(0.88);transform-origin:100% 0;">100</div>
<div class="t" style="right:138px;top:310px;font-size:12px;transform:scaleX(0.88);transform-origin:100% 0;">100</div>
<div class="t" style="right:85px;top:310px;font-size:12px;transform:scaleX(0.88);transform-origin:100% 0;">350</div>
<div class="t" style="left:24px;top:333px;font-size:12px;transform:scaleX(1.0);transform-origin:0 0;">5</div>
<div class="t" style="right:1211px;top:330px;font-size:12px;transform:scaleX(0.88);transform-origin:100% 0;">1</div>
<div class="t" style="left:75px;top:330px;font-size:12px;transform:scaleX(0.88);transform-origin:0 0;">1013</div>
<div class="t" style="left:152px;top:330px;font-size:12px;transform:scaleX(0.88);transform-origin:0 0;">Nagy Pulyka Bt.</div>
<div class="t" style="left:235px;top:330px;font-size:12px;transform:scaleX(0.88);transform-origin:0 0;">1013/1</div>
<div class="t" style="left:291px;top:330px;font-size:12px;transform:scaleX(0.88);transform-origin:0 0;">Nagy Pulyka Bt.</div>
<div class="t" style="left:374px;top:330px;font-size:12px;transform:scaleX(0.88);transform-origin:0 0;">Kazincbarcika</div>
<div class="t" style="left:451px;top:330px;font-size:12px;transform:scaleX(0.88);transform-origin:0 0;">BFD</div>
<div class="t" style="left:520px;top:330px;font-size:12px;transform:scaleX(0.88);transform-origin:0 0;">Belföld</div>
<div class="t" style="left:589px;top:330px;font-size:12px;transform:scaleX(0.88);transform-origin:0 0;">20001</div>
<div class="t" style="left:661px;top:330px;font-size:12px;transform:scaleX(0.88);transform-origin:0 0;">Pulyka</div>
<div class="t" style="right:502px;top:330px;font-size:12px;transform:scaleX(0.88);transform-origin:100% 0;">60001</div>
<div class="t" style="right:355px;top:330px;font-size:12px;transform:scaleX(0.88);transform-origin:100% 0;">400</div>
<div class="t" style="right:245px;top:330px;font-size:12px;transform:scaleX(0.88);transform-origin:100% 0;">100</div>
<div class="t" style="right:85px;top:330px;font-size:12px;transform:scaleX(0.88);transform-origin:100% 0;">500</div>
<div class="t" style="left:24px;top:353px;font-size:12px;transform:scaleX(1.0);transform-origin:0 0;">6</div>
<div class="t" style="right:1211px;top:350px;font-size:12px;transform:scaleX(0.88);transform-origin:100% 0;">2</div>
<div class="t" style="left:75px;top:350px;font-size:12px;transform:scaleX(0.88);transform-origin:0 0;">1017</div>
<div class="t" style="left:152px;top:350px;font-size:12px;transform:scaleX(0.88);transform-origin:0 0;">Szabó Hús-Ker</div>
<div class="t" style="left:235px;top:350px;font-size:12px;transform:scaleX(0.88);transform-origin:0 0;">1017</div>
<div class="t" style="left:291px;top:350px;font-size:12px;transform:scaleX(0.88);transform-origin:0 0;">Szabó Hús-Ker</div>
<div class="t" style="left:374px;top:350px;font-size:12px;transform:scaleX(0.88);transform-origin:0 0;">Ráckeve</div>
<div class="t" style="left:451px;top:350px;font-size:12px;transform:scaleX(0.88);transform-origin:0 0;">BFD</div>
<div class="t" style="left:520px;top:350px;font-size:12px;transform:scaleX(0.88);transform-origin:0 0;">Belföld</div>
<div class="t" style="left:589px;top:350px;font-size:12px;transform:scaleX(0.88);transform-origin:0 0;">30001</div>
<div class="t" style="left:661px;top:350px;font-size:12px;transform:scaleX(0.88);transform-origin:0 0;">Sertés</div>
<div class="t" style="right:502px;top:350px;font-size:12px;transform:scaleX(0.88);transform-origin:100% 0;">300001</div>
<div class="t" style="right:441px;top:350px;font-size:12px;transform:scaleX(0.88);transform-origin:100% 0;">20</div>
<div class="t" style="right:355px;top:350px;font-size:12px;transform:scaleX(0.88);transform-origin:100% 0;">10</div>
<div class="t" style="right:306px;top:350px;font-size:12px;transform:scaleX(0.88);transform-origin:100% 0;">10</div>
<div class="t" style="right:85px;top:350px;font-size:12px;transform:scaleX(0.88);transform-origin:100% 0;">40</div>
<div class="t" style="left:24px;top:373px;font-size:12px;transform:scaleX(1.0);transform-origin:0 0;">7</div>
<div class="t" style="right:1211px;top:370px;font-size:12px;transform:scaleX(0.88);transform-origin:100% 0;">1</div>
<div class="t" style="left:75px;top:370px;font-size:12px;transform:scaleX(0.88);transform-origin:0 0;">1017</div>
<div class="t" style="left:152px;top:370px;font-size:12px;transform:scaleX(0.88);transform-origin:0 0;">Szabó Hús-Ker</div>
<div class="t" style="left:235px;top:370px;font-size:12px;transform:scaleX(0.88);transform-origin:0 0;">1017</div>
<div class="t" style="left:291px;top:370px;font-size:12px;transform:scaleX(0.88);transform-origin:0 0;">Szabó Hús-Ker</div>
<div class="t" style="left:374px;top:370px;font-size:12px;transform:scaleX(0.88);transform-origin:0 0;">Ráckeve</div>
<div class="t" style="left:451px;top:370px;font-size:12px;transform:scaleX(0.88);transform-origin:0 0;">BFD</div>
<div class="t" style="left:520px;top:370px;font-size:12px;transform:scaleX(0.88);transform-origin:0 0;">Belföld</div>
<div class="t" style="left:589px;top:370px;font-size:12px;transform:scaleX(0.88);transform-origin:0 0;">30001</div>
<div class="t" style="left:661px;top:370px;font-size:12px;transform:scaleX(0.88);transform-origin:0 0;">Sertés</div>
<div class="t" style="right:502px;top:370px;font-size:12px;transform:scaleX(0.88);transform-origin:100% 0;">300001</div>
<div class="t" style="right:441px;top:370px;font-size:12px;transform:scaleX(0.88);transform-origin:100% 0;">20</div>
<div class="t" style="right:355px;top:370px;font-size:12px;transform:scaleX(0.88);transform-origin:100% 0;">20</div>
<div class="t" style="right:306px;top:370px;font-size:12px;transform:scaleX(0.88);transform-origin:100% 0;">10</div>
<div class="t" style="right:245px;top:370px;font-size:12px;transform:scaleX(0.88);transform-origin:100% 0;">10</div>
<div class="t" style="right:85px;top:370px;font-size:12px;transform:scaleX(0.88);transform-origin:100% 0;">60</div>
<div class="t" style="left:24px;top:393px;font-size:12px;transform:scaleX(1.0);transform-origin:0 0;">8</div>
<div class="t" style="left:75px;top:390px;font-size:12px;transform:scaleX(0.88);transform-origin:0 0;">Mindösszesen</div>
<div class="t" style="right:441px;top:390px;font-size:12px;transform:scaleX(0.88);transform-origin:100% 0;">240</div>
<div class="t" style="right:398px;top:390px;font-size:12px;transform:scaleX(0.88);transform-origin:100% 0;">750</div>
<div class="t" style="right:355px;top:390px;font-size:12px;transform:scaleX(0.88);transform-origin:100% 0;">1 630</div>
<div class="t" style="right:306px;top:390px;font-size:12px;transform:scaleX(0.88);transform-origin:100% 0;">820</div>
<div class="t" style="right:245px;top:390px;font-size:12px;transform:scaleX(0.88);transform-origin:100% 0;">730</div>
<div class="t" style="right:195px;top:390px;font-size:12px;transform:scaleX(0.88);transform-origin:100% 0;">500</div>
<div class="t" style="right:138px;top:390px;font-size:12px;transform:scaleX(0.88);transform-origin:100% 0;">750</div>
<div class="t" style="right:85px;top:390px;font-size:12px;transform:scaleX(0.88);transform-origin:100% 0;">5 420</div>
<div class="a" style="left:49px;top:248px;width:23px;height:21px;border:2px solid #000"></div>
<div class="a" style="left:18px;top:249px;width:3px;height:20px;background:#12103a"></div>
<div class="a" style="left:18px;top:248px;width:31px;height:2px;background:#12103a"></div>
<div class="a" style="left:20px;top:737px;width:1235px;height:16px;background:#ada8d8"></div>
<div class="raised" style="left:20px;top:737px;width:14px;height:15px;border-bottom-width:2px"></div>
<svg class="a" style="left:20px;top:737px" width="14" height="14"><path d="M5 7 L9 3 V11Z" fill="#000"/></svg>
<div class="raised" style="left:34px;top:737px;width:1139px;height:15px;border-bottom-width:2px"></div>
<div class="a" style="left:1173px;top:737px;width:68px;height:16px;background:repeating-conic-gradient(#d8d4fc 0 25%,#ada8d8 0 50%) 0 0/2px 2px"></div>
<div class="raised" style="left:1240px;top:737px;width:15px;height:15px;border-bottom-width:2px"></div>
<svg class="a" style="left:1240px;top:737px" width="14" height="14"><path d="M5 3 L9 7 L5 11Z" fill="#000"/></svg>
<div class="a" style="left:18px;top:751px;width:2px;height:1px;background:#12103a"></div>
<div class="sunk" style="left:4px;top:773px;width:44px;height:16px"></div>
<div class="t" style="left:6px;top:776px;font-size:11px;transform:scaleX(1.06);transform-origin:0 0;">-v1.94H</div>
<div class="sunk" style="left:50px;top:773px;width:127px;height:16px"></div>
<div class="t" style="left:52px;top:776px;font-size:11px;transform:scaleX(1.0);transform-origin:0 0;">1 / 8</div>
<div class="sunk" style="left:179px;top:773px;width:23px;height:16px"></div>
<svg class="a" style="left:180px;top:774px" width="14" height="14"><circle cx="6.5" cy="7" r="5" fill="#fff"/><path d="M3 10 A5 5 0 0 1 9.5 3" stroke="#000" stroke-width="1.5" fill="none"/></svg>
<div class="sunk" style="left:205px;top:773px;width:1050px;height:16px"></div>
<div class="t" style="left:206px;top:776px;font-size:11px;transform:scaleX(1.0);transform-origin:0 0;">(*)Sorszám</div>
</body></html>
